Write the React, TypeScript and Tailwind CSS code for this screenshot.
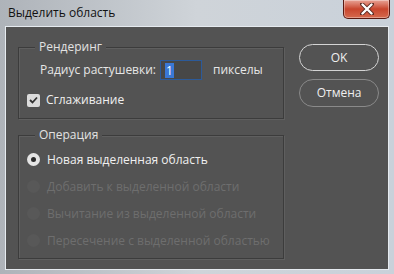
import React from "react";

const font = { fontFamily: '"Open Sans", "Noto Sans", sans-serif' };

function CloseButton() {
    return (
        <div className="mr-[4px] flex h-[19px] w-[47px] items-center justify-center rounded-b-[5px] border border-t-0 border-[#5a1a12] bg-gradient-to-b from-[#e7a396] via-[#c8452d] to-[#d5694e] shadow-[inset_0_0_0_1px_rgba(255,255,255,0.35)]">
            <svg width="14" height="12" viewBox="0 0 14 12">
                <path d="M2 1 L12 11 M12 1 L2 11" stroke="#5a2a22" strokeWidth="4" strokeLinecap="round" />
                <path d="M2.5 1.5 L11.5 10.5 M11.5 1.5 L2.5 10.5" stroke="#ffffff" strokeWidth="2.4" strokeLinecap="round" />
            </svg>
        </div>
    );
}

function GroupBox({ title, children, className }: { title: string; children: React.ReactNode; className?: string }) {
    return (
        <div className={`border border-[#3c3c3c] shadow-[1px_1px_0_#5f5f5f,inset_1px_1px_0_#5f5f5f] pl-[8px] ${className ?? ""}`}>
            <span className="-mt-[9px] ml-[8px] block h-[16px] w-fit bg-[#535353] px-[4px] text-[12px] leading-[16px] text-[#e2e2e2]">
                {title}
            </span>
            {children}
        </div>
    );
}

function Radio({ label, checked, disabled }: { label: string; checked?: boolean; disabled?: boolean }) {
    return (
        <div className="flex h-[27px] items-center gap-[7px]">
            <span
                className={`flex h-[13px] w-[13px] items-center justify-center rounded-full ${
                    disabled ? "bg-[#585858]" : "bg-[#e4e4e4]"
                }`}
            >
                {checked && <span className="h-[5px] w-[5px] rounded-full bg-[#2a2a2a]" />}
            </span>
            <span className={`text-[12px] leading-[16px] ${disabled ? "text-[#6e6e6e]" : "text-[#f0f0f0]"}`}>
                {label}
            </span>
        </div>
    );
}

export default function App() {
    return (
        <div
            style={font}
            className="flex h-[274px] w-[394px] flex-col bg-gradient-to-r from-[#aeb3b9] via-[#cfd4d9] to-[#c9d1da]"
        >
            <div className="flex h-[26px] items-start justify-between">
                <span className="ml-[8px] mt-[5px] text-[12px] leading-[16px] text-[#111111]">Выделить область</span>
                <CloseButton />
            </div>

            <div className="mx-[5px] mb-[4px] flex flex-1 border border-[#e6ebf0] bg-[#535353] pl-[12px] pr-[9px] pt-[20px]">
                <div className="w-[267px]">
                    <GroupBox title="Рендеринг" className="h-[72px]">
                        <div className="ml-[13px] mt-[5px] flex h-[20px] items-center">
                            <span className="text-[12px] leading-[16px] text-[#e6e6e6]">Радиус растушевки:</span>
                            <div className="ml-[4px] flex h-[20px] w-[42px] items-center border border-[#2c5a99] bg-[#474747] pl-[4px]">
                                <span className="bg-[#3a78d6] px-[1px] text-[12px] leading-[15px] text-white">1</span>
                            </div>
                            <span className="ml-[11px] text-[12px] leading-[16px] text-[#e6e6e6]">пикселы</span>
                        </div>
                        <div className="mt-[10px] flex h-[20px] items-center gap-[6px]">
                            <span className="flex h-[13px] w-[13px] items-center justify-center rounded-[2px] bg-[#dcdcdc]">
                                <svg width="9" height="8" viewBox="0 0 9 8">
                                    <path d="M1 4 L3.5 6.5 L8 1.5" stroke="#333333" strokeWidth="1.8" fill="none" />
                                </svg>
                            </span>
                            <span className="text-[12px] leading-[16px] text-[#f0f0f0]">Сглаживание</span>
                        </div>
                    </GroupBox>

                    <GroupBox title="Операция" className="mt-[16px] h-[124px]">
                        <div className="mt-[3px] flex flex-col">
                            <Radio label="Новая выделенная область" checked />
                            <Radio label="Добавить к выделенной области" disabled />
                            <Radio label="Вычитание из выделенной области" disabled />
                            <Radio label="Пересечение с выделенной областью" disabled />
                        </div>
                    </GroupBox>
                </div>

                <div className="ml-[15px] mt-[-3px] flex w-[80px] flex-col gap-[8px]">
                    <button className="h-[27px] rounded-full border border-[#d4d4d4] bg-[#535353] text-[12px] text-[#efefef]">
                        OK
                    </button>
                    <button className="h-[28px] rounded-full border border-[#8a8a8a] bg-[#535353] text-[12px] text-[#efefef]">
                        Отмена
                    </button>
                </div>
            </div>
        </div>
    );
}
